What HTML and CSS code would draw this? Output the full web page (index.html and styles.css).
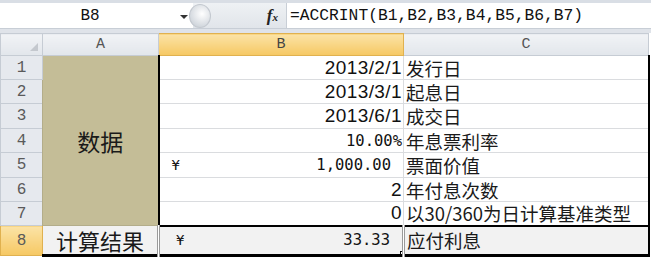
FILE: index.html
```html
<!DOCTYPE html>
<html lang="zh-CN">
<head>
    <meta charset="UTF-8">
    <title>ACCRINT</title>
    <link rel="stylesheet" href="styles.css">
</head>
<body>
    <div class="sheet">
        <div class="ribbon-edge"></div>
        <div class="formula-bar">
            <div class="name-box">
                <span class="name">B8</span>
                <span class="drop"></span>
            </div>
            <div class="bar-tools">
                <span class="knob"></span>
                <span class="fx"><i>f</i><b>x</b></span>
            </div>
            <div class="formula-input">=ACCRINT(B1,B2,B3,B4,B5,B6,B7)</div>
        </div>
        <div class="bar-gap"></div>

        <table class="grid">
            <colgroup>
                <col class="w-head">
                <col class="w-a">
                <col class="w-b">
                <col class="w-c">
            </colgroup>
            <tr class="col-heads">
                <th class="corner"><span class="tri"></span></th>
                <th>A</th>
                <th class="sel">B</th>
                <th>C</th>
            </tr>
            <tr class="r-a">
                <th class="row-head">1</th>
                <td class="merged" rowspan="7">数据</td>
                <td class="val">2013/2/1</td>
                <td class="label">发行日</td>
            </tr>
            <tr class="r-a">
                <th class="row-head">2</th>
                <td class="val">2013/3/1</td>
                <td class="label">起息日</td>
            </tr>
            <tr class="r-b">
                <th class="row-head">3</th>
                <td class="val">2013/6/1</td>
                <td class="label">成交日</td>
            </tr>
            <tr class="r-a">
                <th class="row-head">4</th>
                <td class="val mono">10.00%</td>
                <td class="label">年息票利率</td>
            </tr>
            <tr class="r-b">
                <th class="row-head">5</th>
                <td class="val mono acct"><span class="cur">¥</span>1,000.00</td>
                <td class="label">票面价值</td>
            </tr>
            <tr class="r-a">
                <th class="row-head">6</th>
                <td class="val">2</td>
                <td class="label">年付息次数</td>
            </tr>
            <tr class="r-a last-data">
                <th class="row-head">7</th>
                <td class="val">0</td>
                <td class="label">以30/360为日计算基准类型</td>
            </tr>
            <tr class="result">
                <th class="row-head sel">8</th>
                <td class="res-title">计算结果</td>
                <td class="val mono acct active"><span class="cur">¥</span>33.33<span class="handle"></span></td>
                <td class="label">应付利息</td>
            </tr>
        </table>
    </div>
</body>
</html>
```

FILE: styles.css
```css
body {
    margin: 0;
    padding: 0;
    background-color: #ffffff;
    font-family: "Liberation Sans", Arial, sans-serif;
    color: #000;
}

.sheet {
    width: 651px;
    height: 260px;
    overflow: hidden;
    background-color: #ffffff;
}

.ribbon-edge {
    height: 3px;
    background-color: #d9dee5;
}

/* formula bar */
.formula-bar {
    display: flex;
    height: 25px;
    border-bottom: 1px solid #c8ced6;
    background-color: #e9ecf0;
}

.name-box {
    width: 193px;
    display: flex;
    align-items: center;
    background-color: #ffffff;
}

.name {
    width: 180px;
    text-align: center;
    font-family: "Liberation Mono", monospace;
    font-size: 16px;
    color: #111;
}

.drop {
    width: 0;
    height: 0;
    border-left: 4px solid transparent;
    border-right: 4px solid transparent;
    border-top: 4px solid #333;
    margin-top: 2px;
}

.bar-tools {
    width: 93px;
    display: flex;
    align-items: center;
    justify-content: space-between;
    background: linear-gradient(#eef1f4, #e1e5ea);
}

.knob {
    width: 20px;
    height: 22px;
    margin-left: -4px;
    border-radius: 50%;
    background: radial-gradient(circle at 60% 40%, #ffffff, #d3d8de 70%, #b9bfc7);
    border: 1px solid #c3c8cf;
}

.fx {
    margin-right: 8px;
    font-family: "Liberation Serif", serif;
    font-size: 17px;
    color: #222;
}

.fx i {
    font-weight: bold;
}

.fx b {
    font-size: 11px;
    font-style: italic;
}

.formula-input {
    flex: 1;
    display: flex;
    align-items: center;
    padding-left: 3px;
    background-color: #ffffff;
    border-left: 1px solid #c8ced6;
    font-family: "Liberation Mono", monospace;
    font-size: 16.3px;
    color: #111;
}

.bar-gap {
    height: 4px;
    background-color: #dfe3e9;
}

/* grid */
.grid {
    border-collapse: collapse;
    table-layout: fixed;
    width: 648px;
}

.w-head { width: 42px; }
.w-a { width: 116px; }
.w-b { width: 245px; }
.w-c { width: 245px; }

.grid th,
.grid td {
    padding: 0;
    border: 1px solid #dadcdf;
    line-height: 20px;
    white-space: nowrap;
    overflow: hidden;
}

.col-heads th {
    height: 21px;
    background: linear-gradient(#f1f3f6, #e2e6eb);
    border-color: #c6ccd4;
    font-family: "Liberation Mono", monospace;
    font-weight: normal;
    font-size: 15px;
    color: #555;
}

.col-heads th.sel {
    background: linear-gradient(#fbe3a6, #f6c863);
    border-color: #e0b14f;
    color: #444;
}

.corner {
    position: relative;
}

.tri {
    position: absolute;
    right: 4px;
    bottom: 4px;
    width: 0;
    height: 0;
    border-left: 8px solid transparent;
    border-bottom: 8px solid #c4c8ce;
}

.row-head {
    background-color: #e6e9ee;
    border-color: #c6ccd4 !important;
    font-family: "Liberation Mono", monospace;
    font-weight: normal;
    font-size: 16px;
    color: #5a5a5a;
    text-align: center;
}

.row-head.sel {
    background: linear-gradient(#fbe3a6, #f6c863);
    border-color: #e0b14f !important;
}

.r-a { height: 24px; }
.r-b { height: 25px; }

.merged {
    background-color: #c4bd97;
    border-color: #b3ad8a !important;
    text-align: center;
    vertical-align: middle;
    font-family: "Noto Sans CJK SC", sans-serif;
    font-size: 23px;
    color: #1a1a1a;
}

.val {
    text-align: right;
    padding-right: 1px !important;
    font-size: 19px;
    letter-spacing: 0.4px;
    color: #111;
    border-left: 2px solid #000 !important;
}

.mono {
    font-family: "DejaVu Sans Mono", monospace;
    font-size: 15.5px;
    letter-spacing: 0;
}

.acct {
    padding-right: 12px !important;
}

.cur {
    float: left;
    padding-left: 12px;
    font-size: 14px;
}

.label {
    padding-left: 2px !important;
    font-family: "Noto Sans CJK SC", sans-serif;
    font-size: 18.5px;
    color: #1a1a1a;
    border-left: 1px solid #444 !important;
    border-right: 2px solid #000 !important;
}

.last-data td.val,
.last-data td.label {
    border-bottom: 2px solid #000;
}

.result {
    height: 30px;
    background-color: #f2f2f2;
}

.result td {
    border-bottom: 3px solid #000 !important;
}

.res-title {
    text-align: center;
    font-family: "Noto Sans CJK SC", sans-serif;
    font-size: 22px;
    color: #1a1a1a;
    border-left: 1px solid #d0d0d0;
}

.active {
    position: relative;
    border-left: 3px double #9a9a9a !important;
    border-right: 3px double #9a9a9a !important;
}

.active .cur {
    padding-left: 16px;
}

.handle {
    position: absolute;
    right: -5px;
    bottom: -4px;
    width: 5px;
    height: 5px;
    background-color: #ffffff;
    border: 1px solid #000;
}
```
